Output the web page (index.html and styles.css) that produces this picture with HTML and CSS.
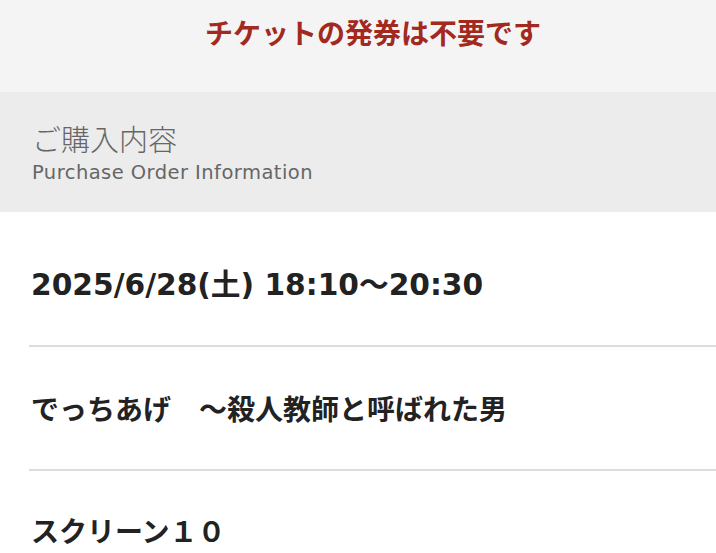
FILE: index.html
```html
<!DOCTYPE html>
<html lang="ja">
<head>
<meta charset="utf-8">
<link rel="stylesheet" href="styles.css">
</head>
<body>
<header class="notice">
  <h1 class="notice-title">チケットの発券は不要です</h1>
</header>
<section class="section-head">
  <div class="section-ja">ご購入内容</div>
  <div class="section-en">Purchase Order Information</div>
</section>
<ul class="rows">
  <li class="row row-first row-latin">2025/6/28(土) 18:10〜20:30</li>
  <li class="row">でっちあげ　～殺人教師と呼ばれた男</li>
  <li class="row row-last">スクリーン１０</li>
</ul>
</body>
</html>
```
FILE: styles.css
```css
html, body {
  margin: 0;
  padding: 0;
  background: #ffffff;
  font-family: "DejaVu Sans", "Noto Sans CJK JP", sans-serif;
}
.notice {
  background: #f4f4f4;
  height: 92px;
  display: flex;
  justify-content: center;
  padding-left: 30px;
  box-sizing: border-box;
}
.notice-title {
  margin: 14px 0 0;
  font-family: "Noto Sans CJK JP", sans-serif;
  font-size: 28px;
  line-height: 36px;
  font-weight: 700;
  color: #a3291f;
}
.section-head {
  background: #ececec;
  height: 120px;
  box-sizing: border-box;
  padding: 27px 0 0 32px;
  color: #666666;
}
.section-ja {
  font-family: "Noto Sans CJK JP", sans-serif;
  font-size: 29px;
  line-height: 38px;
  font-weight: 300;
}
.section-en {
  margin-top: 3px;
  font-size: 19.5px;
  line-height: 26px;
  letter-spacing: 0.45px;
}
.rows {
  list-style: none;
  margin: 0;
  padding: 0 0 0 29px;
}
.row {
  border-bottom: 2px solid #dddddd;
  padding: 41px 0 41px 2px;
  font-family: "Noto Sans CJK JP", sans-serif;
  font-size: 28px;
  line-height: 40px;
  font-weight: 700;
  color: #222222;
}
.row-first {
  padding-top: 53px;
  padding-bottom: 40px;
}
.row-latin {
  font-family: "DejaVu Sans", "Noto Sans CJK JP", sans-serif;
  font-size: 29.7px;
}
.row-last {
  padding-top: 39px;
  border-bottom: none;
}
```
